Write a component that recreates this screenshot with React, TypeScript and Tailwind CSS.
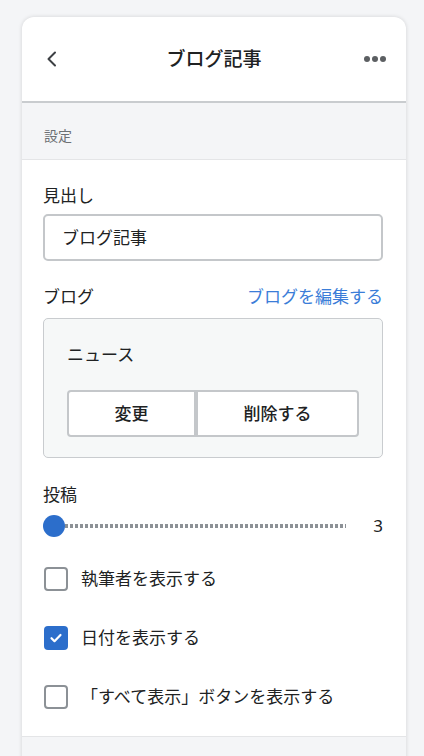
import React, { useState } from 'react';

const font = { fontFamily: '"Noto Sans", "Noto Sans CJK JP", sans-serif' };

const Checkbox: React.FC<{ checked: boolean; label: string; onToggle: () => void }> = ({ checked, label, onToggle }) => (
  <label className="flex items-center h-[24px] cursor-pointer" onClick={onToggle}>
    {checked ? (
      <span className="w-[24px] h-[24px] rounded-[4px] bg-[#2c6ecb] flex items-center justify-center">
        <svg width="14" height="14" viewBox="0 0 14 14" fill="none">
          <path d="M2.5 7.2l3 3 6-6.2" stroke="white" strokeWidth="2.2" strokeLinecap="round" strokeLinejoin="round" />
        </svg>
      </span>
    ) : (
      <span className="w-[24px] h-[24px] rounded-[4px] border-2 border-[#8c9196] bg-white" />
    )}
    <span className="ml-[13px] text-[17px] text-[#202223] leading-[24px]">{label}</span>
  </label>
);

const App: React.FC = () => {
  const [author, setAuthor] = useState(false);
  const [date, setDate] = useState(true);
  const [viewAll, setViewAll] = useState(false);

  return (
    <div className="min-h-screen bg-[#f4f5f7] pt-[17px] pl-[22px] pr-[18px]" style={font}>
      <div className="bg-white rounded-t-[12px] shadow-[0_0_4px_rgba(0,0,0,0.14)] overflow-hidden">
        {/* Header */}
        <div className="h-[86px] flex items-center justify-between px-[20px] border-b-2 border-[#c9cccf]">
          <svg width="14" height="18" viewBox="0 0 14 18" fill="none" className="ml-[3px]">
            <path d="M10 2.5L3.5 9l6.5 6.5" stroke="#3d4044" strokeWidth="2" strokeLinecap="round" strokeLinejoin="round" />
          </svg>
          <h1 className="text-[19px] font-medium text-[#202223] ml-[6px]">ブログ記事</h1>
          <svg width="24" height="8" viewBox="0 0 24 8" className="mr-[-1px]">
            <circle cx="4" cy="4" r="3" fill="#5c5f62" />
            <circle cx="12" cy="4" r="3" fill="#5c5f62" />
            <circle cx="20" cy="4" r="3" fill="#5c5f62" />
          </svg>
        </div>

        {/* Section title */}
        <div className="h-[57px] bg-[#f4f5f7] border-b border-[#e4e5e7] px-[22px] pt-[23px]">
          <p className="text-[14px] text-[#6d7175] leading-[20px]">設定</p>
        </div>

        {/* Content */}
        <div className="pl-[21px] pr-[23px] pt-[26px] pb-[27px]">
          <p className="text-[17px] text-[#202223] leading-[20px]">見出し</p>
          <div className="mt-[8px] h-[47px] border-2 border-[#c4c7ca] rounded-[5px] flex items-center px-[17px]">
            <span className="text-[17px] text-[#202223]">ブログ記事</span>
          </div>

          <div className="mt-[26px] flex items-center justify-between leading-[20px]">
            <p className="text-[17px] text-[#202223]">ブログ</p>
            <a className="text-[17px] text-[#3b7dd8]">ブログを編集する</a>
          </div>

          <div className="mt-[11px] h-[140px] bg-[#f6f8f8] border-[1.5px] border-[#c9cccf] rounded-[5px] px-[23px] pt-[25px]">
            <p className="text-[17px] text-[#202223] leading-[22px]">ニュース</p>
            <div className="mt-[24px] flex">
              <button className="flex-auto h-[47px] bg-white border-2 border-[#c4c7ca] rounded-l-[4px] text-[17px] font-medium text-[#202223]">
                変更
              </button>
              <button className="flex-auto h-[47px] bg-white border-2 border-[#c4c7ca] rounded-r-[4px] text-[17px] font-medium text-[#202223]">
                削除する
              </button>
            </div>
          </div>

          <p className="mt-[27px] text-[17px] text-[#202223] leading-[20px]">投稿</p>
          <div className="mt-[10px] flex items-center h-[22px]">
            <span className="w-[22px] h-[22px] rounded-full bg-[#2c6ecb] shrink-0" />
            <div className="w-[281px] h-[4px] bg-[repeating-linear-gradient(90deg,#8c9196_0_3px,transparent_3px_5px)]" />
            <span className="ml-auto text-[17px] text-[#202223]">3</span>
          </div>

          <div className="mt-[30px] ml-[1px] flex flex-col gap-[35px]">
            <Checkbox checked={author} label="執筆者を表示する" onToggle={() => setAuthor(!author)} />
            <Checkbox checked={date} label="日付を表示する" onToggle={() => setDate(!date)} />
            <Checkbox checked={viewAll} label="「すべて表示」ボタンを表示する" onToggle={() => setViewAll(!viewAll)} />
          </div>
        </div>

        {/* Next section */}
        <div className="h-[40px] bg-[#f4f5f7] border-t border-[#e4e5e7]" />
      </div>
    </div>
  );
};

export default App;
